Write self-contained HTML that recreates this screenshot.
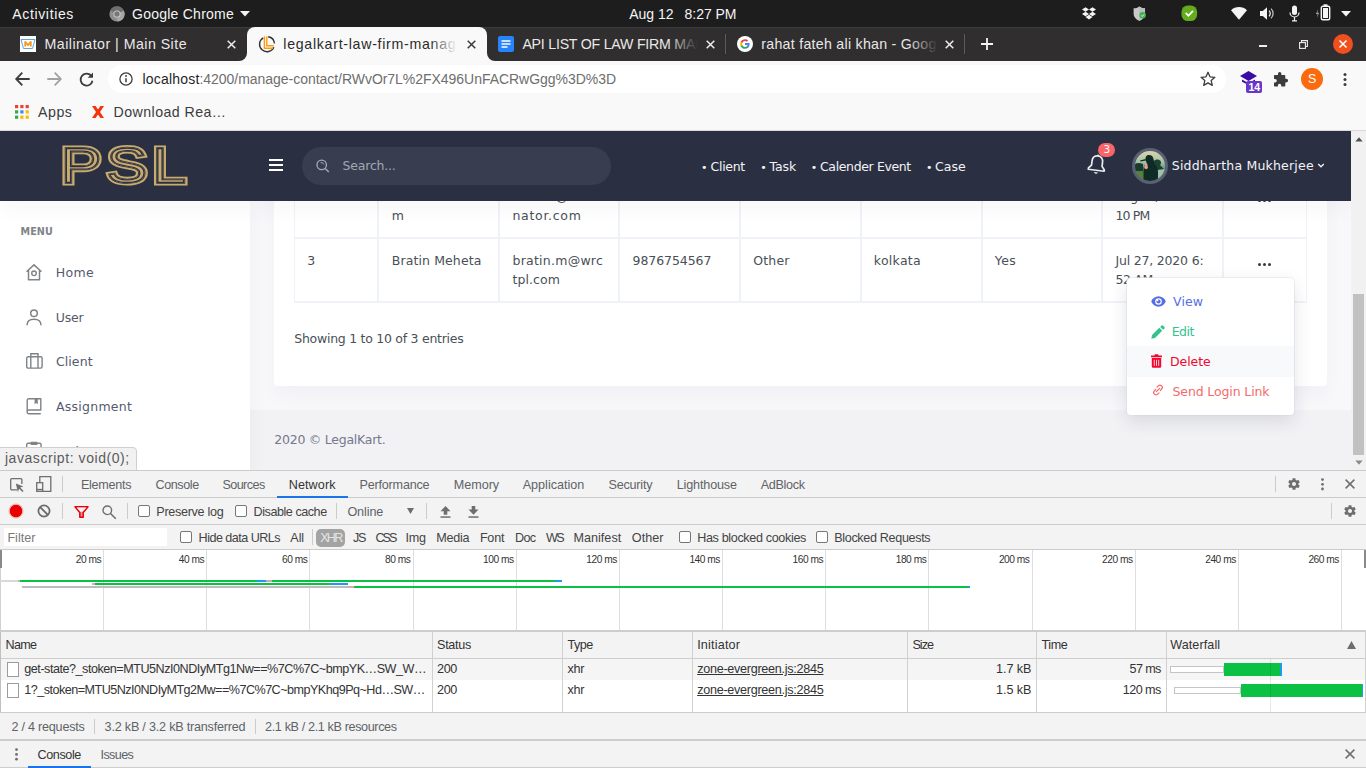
<!DOCTYPE html>
<html lang="en">
<head>
<meta charset="utf-8">
<title>legalkart-law-firm-management</title>
<style>
*{box-sizing:border-box;margin:0;padding:0}
html,body{width:1366px;height:768px;overflow:hidden;background:#fff}
body{position:relative;font-family:"Liberation Sans",sans-serif;color:#222}
.a{position:absolute}
.t{position:absolute;white-space:nowrap}
svg{position:absolute;overflow:visible}
#gnome{left:0;top:0;width:1366px;height:27px;background:#1d1d1d;color:#f4f4f4}
#tabs{left:0;top:27px;width:1366px;height:34px;background:#302e2e;color:#e8e8e8}
#toolbar{left:0;top:61px;width:1366px;height:70px;background:#f9f9f9;color:#202124}
#page{left:0;top:131px;width:1351px;height:339px;background:#f8f8fb;overflow:hidden;color:#495057}
#vscroll{left:1351px;top:131px;width:15px;height:339px;background:#f1f1f1}
#dev{left:0;top:470px;width:1366px;height:298px;background:#fff;color:#333;overflow:hidden}
.hl{position:absolute;left:0;width:1366px;height:1px;background:#cbcbcb}
.vl{position:absolute;width:1px;background:#cbcbcb}
.cb{position:absolute;width:12px;height:12px;border:1px solid #767676;border-radius:2px;background:#fff}
</style>
</head>
<body>
<div id="gnome" class="a">
<span class="t" style="left:12.3px;top:5px;line-height:18px;font-size:14px;letter-spacing:0.647px;">Activities</span>
<svg style="left:109px;top:5.5px" width="16" height="16" viewBox="0 0 16 16"><circle cx="8" cy="8" r="7.6" fill="#8e8e8e"/><path d="M8 8 L1.2 4.4 A7.6 7.6 0 0 1 14.9 4.8 Z" fill="#6f6f6f"/><path d="M8 8 L14.9 4.8 A7.6 7.6 0 0 1 8.4 15.6 Z" fill="#a5a5a5"/><circle cx="8" cy="8" r="3.5" fill="#d6d6d6"/><circle cx="8" cy="8" r="2.7" fill="#777"/></svg>
<span class="t" style="left:132px;top:5px;line-height:18px;font-size:14px;letter-spacing:0.244px;">Google Chrome</span>
<svg style="left:240px;top:11px" width="10" height="6" viewBox="0 0 10 6"><path d="M0 0h10L5 5.5z" fill="#f4f4f4"/></svg>
<span class="t" style="left:629.2px;top:5px;line-height:18px;font-size:14px;letter-spacing:-0.013px;">Aug 12</span>
<span class="t" style="left:684.6px;top:5px;line-height:18px;font-size:14px;letter-spacing:-0.049px;">8:27 PM</span>
<!-- tray: dropbox -->
<svg style="left:1082px;top:6.8px" width="14" height="12.7" viewBox="0 0 16 14"><path d="M4 0l4 2.6L4 5.2 0 2.6zM12 0l4 2.6-4 2.6-4-2.6zM0 7.8l4-2.6 4 2.6-4 2.6zM12 5.200l4 2.6-4 2.600-4-2.600zM4 11.300l4-2.600 4 2.600-4 2.600z" fill="#f4f4f4"/></svg>
<!-- shield -->
<svg style="left:1132.8px;top:5.7px" width="13.5" height="15.4" viewBox="0 0 15 17.5"><path d="M7 0.500C5 2 3 2.500 0.500 2.600V8.500c0 4 3 6.800 6.500 8.500 3.500-1.700 6.500-4.500 6.500-8.500V2.600C11 2.500 9 2 7 0.500z" fill="#c9c9c9"/><path d="M7 0.500V17c3.500-1.700 6.500-4.500 6.500-8.500V2.600C11 2.500 9 2 7 0.500z" fill="#bdbdbd"/><circle cx="10.800" cy="10.600" r="3.700" fill="#3fb24f"/><path d="M9.100 10.700l1.200 1.200 2.200-2.400" stroke="#fff" stroke-width="1" fill="none"/></svg>
<!-- green check -->
<svg style="left:1180.7px;top:4.7px" width="16.600" height="16.600" viewBox="0 0 17 17"><rect x="0.500" y="0.500" width="16" height="16" rx="6.500" fill="#64ab1e"/><path d="M5.300 8.700l2.300 2.300 4.200-4.500" stroke="#fff" stroke-width="1.800" fill="none" stroke-linecap="round"/></svg>
<!-- wifi -->
<svg style="left:1231px;top:7px" width="16" height="13" viewBox="0 0 16 13"><path d="M8 12.800L0 3.200C2.200 1.200 5 0 8 0s5.800 1.200 8 3.200z" fill="#f4f4f4"/></svg>
<!-- volume -->
<svg style="left:1260px;top:7px" width="15" height="13" viewBox="0 0 15 13"><path d="M0 4h2.800L7 0.300v12.400L2.800 9H0z" fill="#f4f4f4"/><path d="M9 3.600a4 4 0 0 1 0 5.800" stroke="#f4f4f4" stroke-width="1.300" fill="none"/><path d="M11 1.600a6.800 6.800 0 0 1 0 9.800" stroke="#bdbdbd" stroke-width="1.300" fill="none"/></svg>
<!-- mic -->
<svg style="left:1289px;top:5px" width="11" height="17" viewBox="0 0 11 17"><rect x="3" y="0.500" width="5" height="9.500" rx="2.500" fill="#f4f4f4"/><path d="M1 7.500a4.500 4.500 0 0 0 9 0M5.500 12v3.500M3 15.800h5" stroke="#f4f4f4" stroke-width="1.200" fill="none"/></svg>
<!-- battery -->
<svg style="left:1315px;top:4px" width="16" height="17" viewBox="0 0 16 17"><path d="M3.200 5L0.800 10h1.800l-0.800 4 2.400-5.200H2.400z" fill="#9a9a9a"/><rect x="6.300" y="2.300" width="8.400" height="13.400" rx="1.500" fill="none" stroke="#f4f4f4" stroke-width="1.400"/><rect x="8.500" y="0.300" width="4" height="2" fill="#f4f4f4"/><rect x="8" y="4" width="5" height="10" fill="#f4f4f4"/></svg>
<svg style="left:1341px;top:11px" width="10" height="6" viewBox="0 0 10 6"><path d="M0 0h10L5 5.500z" fill="#f4f4f4"/></svg>
</div>
<div id="tabs" class="a">
<div class="a" style="left:0;top:0;width:1366px;height:1px;background:#3d3b3b"></div>
<!-- active tab -->
<div class="a" style="left:247px;top:0;width:240px;height:34px;background:#f9f9f9;border-radius:8px 8px 0 0"></div>
<svg style="left:239px;top:26px" width="8" height="8" viewBox="0 0 8 8"><path d="M8 0v8H0A8 8 0 0 0 8 0z" fill="#f9f9f9"/></svg>
<svg style="left:487px;top:26px" width="8" height="8" viewBox="0 0 8 8"><path d="M0 0v8h8A8 8 0 0 1 0 0z" fill="#f9f9f9"/></svg>
<!-- tab1 mailinator -->
<svg style="left:20px;top:9px" width="16" height="16" viewBox="0 0 16 16"><rect width="16" height="16" fill="#fff"/><path d="M1 3.500h14l-2.500 9h-9z" fill="none" stroke="#5aa7e6" stroke-width="1"/><path d="M4.300 5.200h1.800l1.900 2.600 1.900-2.600h1.800v5.300H9.900V8.200L8 10.500 6.100 8.200v2.300H4.300z" fill="#f39a1e"/></svg>
<span class="t" style="left:44.500px;top:8px;line-height:18px;font-size:14.200px;letter-spacing:0.467px;">Mailinator | Main Site</span>
<svg style="left:227.200px;top:12.500px" width="9" height="9" viewBox="0 0 9 9"><path d="M0.700 0.700l7.600 7.600M8.300 0.700L0.700 8.300" stroke="#eee" stroke-width="1.500"/></svg>
<!-- tab2 active -->
<svg style="left:259px;top:8.700px" width="16.400" height="16.400" viewBox="0 0 16.400 16.400"><path d="M9.200 0.800A7.500 7.500 0 0 1 15.500 7.400M14.900 11.300A7.500 7.500 0 1 1 4.200 1.800" fill="none" stroke="#2d303b" stroke-width="1.400"/><path d="M5.400 0.600v11.600h8.600" fill="none" stroke="#ff9a0a" stroke-width="1.400"/><path d="M7.800 0.500v9.200h7" fill="none" stroke="#ff9a0a" stroke-width="1.400"/></svg>
<div class="a" style="left:283px;top:4px;width:174px;height:24px;overflow:hidden"><span class="t" style="left:0.300px;top:4px;line-height:18px;font-size:14.200px;letter-spacing:0.708px;color:#2b2b2b;">legalkart-law-firm-manage</span></div>
<div class="a" style="left:430px;top:4px;width:27px;height:24px;background:linear-gradient(90deg,rgba(249,249,249,0),#f9f9f9)"></div>
<svg style="left:466.500px;top:12.500px" width="9" height="9" viewBox="0 0 9 9"><path d="M0.700 0.700l7.600 7.600M8.300 0.700L0.700 8.300" stroke="#3a3a3a" stroke-width="1.500"/></svg>
<!-- tab3 docs -->
<svg style="left:498px;top:9px" width="16" height="16" viewBox="0 0 16 16"><rect width="16" height="16" rx="2" fill="#2684fc"/><path d="M3.500 5h9M3.500 8h9M3.500 11h6" stroke="#fff" stroke-width="1.500"/></svg>
<div class="a" style="left:522px;top:4px;width:176px;height:24px;overflow:hidden"><span class="t" style="left:0.400px;top:4px;line-height:18px;font-size:14.200px;letter-spacing:-0.234px;">API LIST OF LAW FIRM MAN</span></div>
<div class="a" style="left:668px;top:4px;width:30px;height:24px;background:linear-gradient(90deg,rgba(48,46,46,0),#302e2e)"></div>
<svg style="left:705.500px;top:12.500px" width="9" height="9" viewBox="0 0 9 9"><path d="M0.700 0.700l7.600 7.600M8.300 0.700L0.700 8.300" stroke="#eee" stroke-width="1.500"/></svg>
<div class="a" style="left:725px;top:7px;width:1px;height:20px;background:#5c5a5a"></div>
<!-- tab4 google -->
<svg style="left:737px;top:9px" width="16" height="16" viewBox="0 0 16 16"><circle cx="8" cy="8" r="8" fill="#fff"/><path d="M12.600 8.100c0-.4 0-.7-.1-1H8v1.900h2.600c-.1.600-.5 1.100-1 1.500v1.200h1.600c.9-.9 1.400-2.100 1.400-3.600z" fill="#4285f4"/><path d="M8 12.800c1.300 0 2.400-.4 3.200-1.200l-1.600-1.200c-.4.300-1 .5-1.600.5-1.200 0-2.300-.8-2.700-2H3.700v1.300c.8 1.600 2.400 2.600 4.300 2.600z" fill="#34a853"/><path d="M5.300 8.900c-.1-.3-.2-.6-.2-.9s.1-.6.200-.9V5.800H3.700c-.3.700-.5 1.400-.5 2.200s.2 1.500.5 2.200z" fill="#fbbc05"/><path d="M8 5.100c.7 0 1.300.2 1.800.7l1.400-1.400C10.400 3.600 9.300 3.200 8 3.200c-1.900 0-3.500 1.100-4.300 2.600l1.600 1.300c.4-1.200 1.500-2 2.700-2z" fill="#ea4335"/></svg>
<div class="a" style="left:761px;top:4px;width:177px;height:24px;overflow:hidden"><span class="t" style="left:0.300px;top:4px;line-height:18px;font-size:14.200px;letter-spacing:0.269px;">rahat fateh ali khan - Googl</span></div>
<div class="a" style="left:908px;top:4px;width:30px;height:24px;background:linear-gradient(90deg,rgba(48,46,46,0),#302e2e)"></div>
<svg style="left:944.500px;top:12.500px" width="9" height="9" viewBox="0 0 9 9"><path d="M0.700 0.700l7.600 7.600M8.300 0.700L0.700 8.300" stroke="#eee" stroke-width="1.500"/></svg>
<div class="a" style="left:964px;top:7px;width:1px;height:20px;background:#5c5a5a"></div>
<svg style="left:981px;top:11.200px" width="12" height="12" viewBox="0 0 12 12"><path d="M6 0v12M0 6h12" stroke="#f4f4f4" stroke-width="1.800"/></svg>
<!-- window controls -->
<div class="a" style="left:1259px;top:18.400px;width:8px;height:1.500px;background:#eee"></div>
<svg style="left:1299px;top:13px" width="9" height="9" viewBox="0 0 9 9"><path d="M2.500 2.200V0.600h5.900v5.900H6.800" fill="none" stroke="#eee" stroke-width="1.100"/><rect x="0.600" y="2.600" width="5.800" height="5.800" fill="none" stroke="#eee" stroke-width="1.100"/></svg>
<div class="a" style="left:1333px;top:7px;width:20px;height:20px;border-radius:10px;background:#f0501f"></div>
<svg style="left:1339px;top:13px" width="8" height="8" viewBox="0 0 8 8"><path d="M0.500 0.500l7 7M7.500 0.500l-7 7" stroke="#fff" stroke-width="1.500"/></svg>
</div>
<div id="toolbar" class="a">
<div class="a" style="left:0;top:69px;width:1366px;height:1px;background:#d9d9d9"></div>
<!-- nav icons -->
<svg style="left:14.500px;top:11px" width="15" height="14" viewBox="0 0 15 14"><path d="M7.300 0.700L1.200 7l6.100 6.300M1.200 7h13.500" fill="none" stroke="#3c3c3c" stroke-width="1.800"/></svg>
<svg style="left:46.500px;top:11px" width="15" height="14" viewBox="0 0 15 14"><path d="M7.700 0.700L13.800 7l-6.100 6.300M13.800 7H0.300" fill="none" stroke="#a2a2a2" stroke-width="1.800"/></svg>
<svg style="left:79px;top:10.500px" width="15" height="15" viewBox="0 0 15 15"><path d="M12.600 4.200A6 6 0 1 0 13.500 8.800" fill="none" stroke="#3c3c3c" stroke-width="1.800"/><path d="M14 0.500v5.300H8.700z" fill="#3c3c3c"/></svg>
<!-- url pill -->
<div class="a" style="left:108px;top:4px;width:1118px;height:28px;border-radius:14px;background:#fff"></div>
<svg style="left:119px;top:11px" width="14" height="14" viewBox="0 0 14 14"><circle cx="7" cy="7" r="6.100" fill="none" stroke="#3c3c3c" stroke-width="1.300"/><path d="M7 6.200v4" stroke="#3c3c3c" stroke-width="1.500"/><circle cx="7" cy="4" r="0.900" fill="#3c3c3c"/></svg>
<span class="t" style="left:142.500px;top:9px;line-height:18px;font-size:14px;letter-spacing:0.193px;color:#1f1f1f;">localhost</span>
<span class="t" style="left:199.500px;top:9px;line-height:18px;font-size:14px;letter-spacing:-0.037px;color:#6e6e6e;">:4200/manage-contact/RWvOr7L%2FX496UnFACRwGgg%3D%3D</span>
<svg style="left:1200px;top:10px" width="16" height="16" viewBox="0 0 16 16"><path d="M8 1.300l2 4.500 4.900.5-3.700 3.300 1.100 4.800L8 11.900l-4.300 2.500 1.100-4.800L1.100 6.300 6 5.800z" fill="none" stroke="#3c3c3c" stroke-width="1.300" stroke-linejoin="round"/></svg>
<!-- extension -->
<svg style="left:1239.500px;top:10px" width="17" height="14" viewBox="0 0 17 14"><path d="M8.500 0L17 5l-8.500 5L0 5z" fill="#3a0ca3"/><path d="M2 8.500l6.500 3.800L15 8.500v2.300L8.500 14 2 10.800z" fill="#3a0ca3"/></svg>
<div class="a" style="left:1246px;top:20px;width:16px;height:12px;background:#6a35c9;border-radius:2px"></div>
<span class="t" style="left:1248.400px;top:19px;line-height:14px;font-size:10.600px;letter-spacing:0.002px;color:#fff;font-weight:700;">14</span>
<svg style="left:1272px;top:11px" width="16" height="16" viewBox="0 0 16 16"><path d="M6 1.800a1.700 1.700 0 0 1 3.400 0V3h3.100a.8.800 0 0 1 .8.800v3h1a1.800 1.800 0 0 1 0 3.600h-1v3.300a.8.800 0 0 1-.8.800H9.300v-1.100a1.700 1.700 0 0 0-3.400 0v1.100H2.800a.8.800 0 0 1-.8-.8v-3.200h1.100a1.700 1.700 0 0 0 0-3.400H2V3.800a.8.800 0 0 1 .8-.8H6z" fill="#3c3c3c"/></svg>
<div class="a" style="left:1301px;top:7px;width:22px;height:22px;border-radius:11px;background:#fb6a0c"></div>
<span class="t" style="left:1308px;top:10px;line-height:16px;font-size:12.500px;letter-spacing:-0.344px;color:#fff;">S</span>
<svg style="left:1342.500px;top:11px" width="4" height="15" viewBox="0 0 4 15"><circle cx="2" cy="2.500" r="1.500" fill="#3c3c3c"/><circle cx="2" cy="7.500" r="1.500" fill="#3c3c3c"/><circle cx="2" cy="12.500" r="1.500" fill="#3c3c3c"/></svg>
<!-- bookmarks -->
<svg style="left:14.500px;top:44px" width="14" height="14" viewBox="0 0 14 14"><g><rect x="0" y="0" width="3.200" height="3.200" fill="#ea4335"/><rect x="5.300" y="0" width="3.200" height="3.200" fill="#ea4335"/><rect x="10.600" y="0" width="3.200" height="3.200" fill="#ea4335"/><rect x="0" y="5.300" width="3.200" height="3.200" fill="#34a853"/><rect x="5.300" y="5.300" width="3.200" height="3.200" fill="#4285f4"/><rect x="10.600" y="5.300" width="3.200" height="3.200" fill="#fbbc05"/><rect x="0" y="10.600" width="3.200" height="3.200" fill="#34a853"/><rect x="5.300" y="10.600" width="3.200" height="3.200" fill="#fbbc05"/><rect x="10.600" y="10.600" width="3.200" height="3.200" fill="#fbbc05"/></g></svg>
<span class="t" style="left:38.100px;top:42px;line-height:18px;font-size:14.200px;letter-spacing:0.464px;color:#3c3c3c;">Apps</span>
<svg style="left:91.500px;top:45px" width="12" height="12" viewBox="0 0 12 12"><path d="M0 0h3.600L6 3.600 8.400 0H12L8 6l4 6H8.400L6 8.400 3.600 12H0l4-6z" fill="#f4330d"/></svg>
<span class="t" style="left:113.500px;top:42px;line-height:18px;font-size:14.200px;letter-spacing:0.441px;color:#3c3c3c;">Download Rea…</span>
</div>
<div id="page" class="a">
<!-- content background pieces (page coords: y = abs-131) -->
<div class="a" style="left:250px;top:279px;width:1101px;height:60px;background:#f2f2f5"></div>
<!-- card -->
<div class="a" style="left:274px;top:0;width:1053px;height:255px;background:#fff;border-radius:0 0 4px 4px;box-shadow:0 10px 20px rgba(18,38,63,.03)"></div>
<!-- sidebar -->
<div class="a" style="left:0;top:70px;width:250px;height:269px;background:#fff;box-shadow:0 10px 20px rgba(18,38,63,.04)"></div>
<!-- table (page coords: y = abs-131) -->
<div class="a" style="left:294px;top:60px;width:1px;height:111px;background:#eff2f7"></div>
<div class="a" style="left:1306px;top:60px;width:1px;height:111px;background:#eff2f7"></div>
<div class="a" style="left:377px;top:60px;width:2px;height:111px;background:#eff2f7"></div>
<div class="a" style="left:498px;top:60px;width:2px;height:111px;background:#eff2f7"></div>
<div class="a" style="left:618px;top:60px;width:2px;height:111px;background:#eff2f7"></div>
<div class="a" style="left:739px;top:60px;width:2px;height:111px;background:#eff2f7"></div>
<div class="a" style="left:860px;top:60px;width:2px;height:111px;background:#eff2f7"></div>
<div class="a" style="left:981px;top:60px;width:2px;height:111px;background:#eff2f7"></div>
<div class="a" style="left:1101px;top:60px;width:2px;height:111px;background:#eff2f7"></div>
<div class="a" style="left:1222px;top:60px;width:2px;height:111px;background:#eff2f7"></div>
<div class="a" style="left:294px;top:106px;width:1013px;height:2px;background:#eff2f7"></div>
<div class="a" style="left:294px;top:170px;width:1013px;height:1.500px;background:#eff2f7"></div>
<span class="t" style="left:307.2px;top:57px;line-height:17px;font-size:12.500px;font-family:'DejaVu Sans','Liberation Sans',sans-serif;color:#495057;">2</span>
<span class="t" style="left:391.7px;top:57px;line-height:17px;font-size:12.500px;letter-spacing:-1.435px;font-family:'DejaVu Sans','Liberation Sans',sans-serif;color:#495057;">Mailinator Test Tea</span>
<span class="t" style="left:391.7px;top:76px;line-height:17px;font-size:12.500px;letter-spacing:-0.587px;font-family:'DejaVu Sans','Liberation Sans',sans-serif;color:#495057;">m</span>
<span class="t" style="left:512.5px;top:57px;line-height:17px;font-size:12.500px;letter-spacing:-0.698px;font-family:'DejaVu Sans','Liberation Sans',sans-serif;color:#495057;">admin1@maili</span>
<span class="t" style="left:512.5px;top:76px;line-height:17px;font-size:12.500px;letter-spacing:0.700px;font-family:'DejaVu Sans','Liberation Sans',sans-serif;color:#495057;">nator.com</span>
<span class="t" style="left:632.5px;top:57px;line-height:17px;font-size:12.500px;letter-spacing:-0.063px;font-family:'DejaVu Sans','Liberation Sans',sans-serif;color:#495057;">9830098300</span>
<span class="t" style="left:753.3px;top:57px;line-height:17px;font-size:12.500px;font-family:'DejaVu Sans','Liberation Sans',sans-serif;color:#495057;">Lawfirm</span>
<span class="t" style="left:873.8px;top:57px;line-height:17px;font-size:12.500px;font-family:'DejaVu Sans','Liberation Sans',sans-serif;color:#495057;">kolkata</span>
<span class="t" style="left:994.7px;top:57px;line-height:17px;font-size:12.500px;font-family:'DejaVu Sans','Liberation Sans',sans-serif;color:#495057;">Yes</span>
<span class="t" style="left:1115.5px;top:57px;line-height:17px;font-size:12.500px;letter-spacing:-0.846px;font-family:'DejaVu Sans','Liberation Sans',sans-serif;color:#495057;">Aug 12, 2020 8:</span>
<span class="t" style="left:1115.5px;top:76px;line-height:17px;font-size:12.500px;letter-spacing:-0.881px;font-family:'DejaVu Sans','Liberation Sans',sans-serif;color:#495057;">10 PM</span>
<span class="t" style="left:307.2px;top:121px;line-height:17px;font-size:12.500px;letter-spacing:-0.553px;font-family:'DejaVu Sans','Liberation Sans',sans-serif;color:#495057;">3</span>
<span class="t" style="left:391.7px;top:121px;line-height:17px;font-size:12.500px;letter-spacing:0.116px;font-family:'DejaVu Sans','Liberation Sans',sans-serif;color:#495057;">Bratin Meheta</span>
<span class="t" style="left:512.5px;top:121px;line-height:17px;font-size:12.500px;letter-spacing:0.247px;font-family:'DejaVu Sans','Liberation Sans',sans-serif;color:#495057;">bratin.m@wrc</span>
<span class="t" style="left:512.5px;top:140px;line-height:17px;font-size:12.500px;letter-spacing:0.074px;font-family:'DejaVu Sans','Liberation Sans',sans-serif;color:#495057;">tpl.com</span>
<span class="t" style="left:632.5px;top:121px;line-height:17px;font-size:12.500px;letter-spacing:-0.063px;font-family:'DejaVu Sans','Liberation Sans',sans-serif;color:#495057;">9876754567</span>
<span class="t" style="left:753.3px;top:121px;line-height:17px;font-size:12.500px;letter-spacing:0.140px;font-family:'DejaVu Sans','Liberation Sans',sans-serif;color:#495057;">Other</span>
<span class="t" style="left:873.8px;top:121px;line-height:17px;font-size:12.500px;letter-spacing:0.292px;font-family:'DejaVu Sans','Liberation Sans',sans-serif;color:#495057;">kolkata</span>
<span class="t" style="left:994.7px;top:121px;line-height:17px;font-size:12.500px;letter-spacing:0.471px;font-family:'DejaVu Sans','Liberation Sans',sans-serif;color:#495057;">Yes</span>
<span class="t" style="left:1115.5px;top:121px;line-height:17px;font-size:12.500px;letter-spacing:-0.197px;font-family:'DejaVu Sans','Liberation Sans',sans-serif;color:#495057;">Jul 27, 2020 6:</span>
<span class="t" style="left:1115.5px;top:140px;line-height:17px;font-size:12.500px;letter-spacing:-0.344px;font-family:'DejaVu Sans','Liberation Sans',sans-serif;color:#495057;">52 AM</span>
<div class="a" style="left:1258.3px;top:67.700px;width:3px;height:3px;border-radius:1.500px;background:#343a40"></div>
<div class="a" style="left:1262.9px;top:67.700px;width:3px;height:3px;border-radius:1.500px;background:#343a40"></div>
<div class="a" style="left:1267.5px;top:67.700px;width:3px;height:3px;border-radius:1.500px;background:#343a40"></div>
<div class="a" style="left:1258.3px;top:131.5px;width:3px;height:3px;border-radius:1.500px;background:#343a40"></div>
<div class="a" style="left:1262.9px;top:131.5px;width:3px;height:3px;border-radius:1.500px;background:#343a40"></div>
<div class="a" style="left:1267.5px;top:131.5px;width:3px;height:3px;border-radius:1.500px;background:#343a40"></div>
<span class="t" style="left:294.3px;top:199px;line-height:17px;font-size:12.500px;letter-spacing:-0.269px;font-family:'DejaVu Sans','Liberation Sans',sans-serif;color:#495057;">Showing 1 to 10 of 3 entries</span>
<span class="t" style="left:274.3px;top:300px;line-height:17px;font-size:12.500px;letter-spacing:-0.254px;font-family:'DejaVu Sans','Liberation Sans',sans-serif;color:#74788d;">2020 © LegalKart.</span>
<div class="a" style="left:1127px;top:147px;width:167px;height:137px;background:#fff;border-radius:4px;box-shadow:0 6px 18px rgba(30,40,70,.13),0 0 0 1px rgba(230,233,240,.6)"></div>
<div class="a" style="left:1127px;top:215px;width:167px;height:31px;background:#f8f9fa"></div>
<svg style="left:1150.500px;top:164.500px" width="15" height="11" viewBox="0 0 15 11"><path d="M7.500 0.300C4.200 0.300 1.500 2.400 0.200 5.500c1.300 3.100 4 5.200 7.300 5.200s6-2.100 7.300-5.200C13.500 2.400 10.800 0.300 7.500 0.300z" fill="#556ee6"/><circle cx="7.500" cy="5.500" r="3.300" fill="#fff"/><circle cx="7.500" cy="5.500" r="2.100" fill="#556ee6"/><circle cx="6.600" cy="4.600" r="0.800" fill="#fff"/></svg>
<span class="t" style="left:1173px;top:162px;line-height:17px;font-size:12.500px;letter-spacing:0.132px;font-family:'DejaVu Sans','Liberation Sans',sans-serif;color:#556ee6;">View</span>
<svg style="left:1150.500px;top:193.500px" width="14" height="14" viewBox="0 0 14 14"><path d="M0.300 13.700l0.800-3.700 7.200-7.200 2.900 2.900-7.200 7.200z" fill="#34c38f"/><path d="M9.200 1.900l1.300-1.300a1 1 0 0 1 1.400 0l1.500 1.500a1 1 0 0 1 0 1.400l-1.300 1.300z" fill="#34c38f"/></svg>
<span class="t" style="left:1171.7px;top:192px;line-height:17px;font-size:12.500px;letter-spacing:-0.480px;font-family:'DejaVu Sans','Liberation Sans',sans-serif;color:#34c38f;">Edit</span>
<svg style="left:1151px;top:223px" width="11" height="14" viewBox="0 0 11 14"><path d="M0 1.500h3.300L4 0.300h3l0.700 1.200H11v1.700H0z" fill="#f1082f"/><path d="M0.800 4h9.400v8.600a1.200 1.200 0 0 1-1.200 1.200H2a1.200 1.200 0 0 1-1.200-1.200z" fill="#f1082f"/><path d="M3.300 5.800v6M5.500 5.800v6M7.700 5.800v6" stroke="#fff" stroke-width="0.800"/></svg>
<span class="t" style="left:1170px;top:222px;line-height:17px;font-size:12.500px;letter-spacing:-0.080px;font-family:'DejaVu Sans','Liberation Sans',sans-serif;color:#f1082f;">Delete</span>
<svg style="left:1152px;top:252.500px" width="12" height="12" viewBox="0 0 12 12"><path d="M5 3.200l1.300-1.300a2.300 2.300 0 0 1 3.300 3.300L8.300 6.500M7 8.800L5.700 10.100a2.300 2.300 0 0 1-3.300-3.300L3.700 5.500M4.300 7.700l3.400-3.400" fill="none" stroke="#f46a6a" stroke-width="1.200" stroke-linecap="round"/></svg>
<span class="t" style="left:1172.5px;top:252px;line-height:17px;font-size:12.500px;letter-spacing:-0.117px;font-family:'DejaVu Sans','Liberation Sans',sans-serif;color:#f46a6a;">Send Login Link</span>
<!-- sidebar contents (page coords: y = abs-131) -->
<span class="t" style="left:20.500px;top:94px;line-height:13px;font-size:9.600px;letter-spacing:0.120px;font-family:'DejaVu Sans','Liberation Sans',sans-serif;color:#7f8387;font-weight:700;">MENU</span>
<svg style="left:26px;top:133px" width="16" height="17" viewBox="0 0 16 17"><path d="M8 0.900L1 7.200M8 0.900l7 6.300M2.500 6v9.700h11V6" fill="none" stroke="#7f8387" stroke-width="1.500" stroke-linejoin="round" stroke-linecap="round"/><circle cx="8" cy="9.300" r="2.300" fill="none" stroke="#7f8387" stroke-width="1.400"/></svg>
<span class="t" style="left:55.800px;top:133px;line-height:17px;font-size:12.500px;letter-spacing:0.345px;font-family:'DejaVu Sans','Liberation Sans',sans-serif;color:#545a6d;">Home</span>
<svg style="left:26px;top:178px" width="16" height="17" viewBox="0 0 16 17"><circle cx="8" cy="4.300" r="3.300" fill="none" stroke="#7f8387" stroke-width="1.500"/><path d="M1 16.200c0-4 3-6 7-6s7 2 7 6" fill="none" stroke="#7f8387" stroke-width="1.500"/></svg>
<span class="t" style="left:55.800px;top:178px;line-height:17px;font-size:12.500px;letter-spacing:-0.225px;font-family:'DejaVu Sans','Liberation Sans',sans-serif;color:#545a6d;">User</span>
<svg style="left:26px;top:222px" width="17" height="16" viewBox="0 0 17 16"><rect x="0.700" y="3.800" width="15.400" height="11.300" rx="1.500" fill="none" stroke="#7f8387" stroke-width="1.400"/><path d="M4.800 3.800V0.700h7.200v3.100M4.800 3.800v11.300M12 3.800v11.300" fill="none" stroke="#7f8387" stroke-width="1.400"/></svg>
<span class="t" style="left:55.900px;top:222px;line-height:17px;font-size:12.500px;letter-spacing:0.099px;font-family:'DejaVu Sans','Liberation Sans',sans-serif;color:#545a6d;">Client</span>
<svg style="left:26px;top:267px" width="16" height="17" viewBox="0 0 16 17"><path d="M1.200 13.600V2.200a1.500 1.500 0 0 1 1.500-1.500h12.100v11.300H3a1.800 1.800 0 0 0 0 3.800h11.800" fill="none" stroke="#7f8387" stroke-width="1.400" stroke-linejoin="round"/><path d="M8.600 0.700h3.200v5.500L10.200 5 8.600 6.200z" fill="#7f8387"/></svg>
<span class="t" style="left:55.900px;top:267px;line-height:17px;font-size:12.500px;letter-spacing:0.269px;font-family:'DejaVu Sans','Liberation Sans',sans-serif;color:#545a6d;">Assignment</span>
<svg style="left:26px;top:310px" width="16" height="18" viewBox="0 0 16 18"><rect x="0.700" y="2.200" width="14.400" height="15" rx="1.500" fill="none" stroke="#7f8387" stroke-width="1.400"/><rect x="4.500" y="0.700" width="7" height="3.300" rx="0.800" fill="#7f8387"/></svg>
<span class="t" style="left:55.900px;top:312px;line-height:17px;font-size:12.500px;letter-spacing:-0.071px;font-family:'DejaVu Sans','Liberation Sans',sans-serif;color:#545a6d;">Task</span>
<!-- status bubble -->
<div class="a" style="left:-1px;top:316px;width:138px;height:25px;background:#f1f1f1;border:1px solid #cfcfcf;border-radius:0 4px 0 0"></div>
<span class="t" style="left:4.900px;top:318px;line-height:18px;font-size:14px;letter-spacing:0.565px;color:#5b5b5b;">javascript: void(0);</span>
<!-- app header -->
<div class="a" style="left:0;top:0;width:1351px;height:70px;background:#2a3042;box-shadow:0 10px 20px rgba(18,38,63,.03)"></div>
<svg style="left:0;top:0" width="250" height="70" viewBox="0 0 250 70">
<defs><clipPath id="lg"><text x="0" y="0" style="font-family:'Liberation Sans',sans-serif;font-weight:400;font-size:49.800px;letter-spacing:3.500px">PSL</text></clipPath></defs>
<g transform="translate(60.600 52.400) scale(1.245 1)" style="font-family:'Liberation Sans',sans-serif;font-weight:400;font-size:49.800px;letter-spacing:3.500px">
<text x="0" y="0" fill="none" stroke="#c9ab6e" stroke-width="5" stroke-linejoin="miter">PSL</text>
<text x="0" y="0" fill="#2a3042" stroke="#2a3042" stroke-width="1.300" stroke-linejoin="miter">PSL</text>
<text x="0" y="0" fill="#c9ab6e">PSL</text>
<text x="0" y="0" fill="none" stroke="#2a3042" stroke-width="2.300" clip-path="url(#lg)" stroke-linejoin="miter">PSL</text>
</g>
</svg>
<div class="a" style="left:269px;top:28px;width:14px;height:2px;background:#fff"></div>
<div class="a" style="left:269px;top:33px;width:14px;height:2px;background:#fff"></div>
<div class="a" style="left:269px;top:38px;width:14px;height:2px;background:#fff"></div>
<div class="a" style="left:302px;top:16px;width:309px;height:38px;border-radius:19px;background:#383e4f"></div>
<svg style="left:315.500px;top:28px" width="14" height="14" viewBox="0 0 14 14"><circle cx="5.700" cy="5.900" r="4.700" fill="none" stroke="#a7abba" stroke-width="1.300"/><path d="M9.200 9.400l3.600 3.600" stroke="#a7abba" stroke-width="1.400"/><path d="M4.600 3.700a2.600 2.600 0 0 1 3.200 1.600" stroke="#a7abba" stroke-width="1" fill="none"/></svg>
<span class="t" style="left:342.600px;top:26px;line-height:17px;font-size:12.500px;letter-spacing:-0.208px;font-family:'DejaVu Sans','Liberation Sans',sans-serif;color:#a3a7b5;">Search...</span>
<span class="t" style="left:700.900px;top:29px;line-height:15px;font-size:11px;font-family:'DejaVu Sans','Liberation Sans',sans-serif;color:#f3f3f6;">•</span><span class="t" style="left:710.500px;top:27px;line-height:17px;font-size:12.500px;letter-spacing:-0.284px;font-family:'DejaVu Sans','Liberation Sans',sans-serif;color:#f3f3f6;">Client</span>
<span class="t" style="left:760.300px;top:29px;line-height:15px;font-size:11px;font-family:'DejaVu Sans','Liberation Sans',sans-serif;color:#f3f3f6;">•</span><span class="t" style="left:769.500px;top:27px;line-height:17px;font-size:12.500px;letter-spacing:-0.071px;font-family:'DejaVu Sans','Liberation Sans',sans-serif;color:#f3f3f6;">Task</span>
<span class="t" style="left:810.800px;top:29px;line-height:15px;font-size:11px;font-family:'DejaVu Sans','Liberation Sans',sans-serif;color:#f3f3f6;">•</span><span class="t" style="left:820px;top:27px;line-height:17px;font-size:12.500px;letter-spacing:-0.367px;font-family:'DejaVu Sans','Liberation Sans',sans-serif;color:#f3f3f6;">Calender Event</span>
<span class="t" style="left:926.100px;top:29px;line-height:15px;font-size:11px;font-family:'DejaVu Sans','Liberation Sans',sans-serif;color:#f3f3f6;">•</span><span class="t" style="left:934.900px;top:27px;line-height:17px;font-size:12.500px;letter-spacing:0.077px;font-family:'DejaVu Sans','Liberation Sans',sans-serif;color:#f3f3f6;">Case</span>
<!-- bell -->
<svg style="left:1087px;top:23px" width="20" height="21" viewBox="0 0 20 21"><g transform="rotate(7 10 10)"><path d="M10 1.800c-3.300 0-5.300 2.400-5.300 5.600v4.300L2 15v1.300h16V15l-2.700-3.300V7.400c0-3.200-2-5.600-5.300-5.600z" fill="none" stroke="#e9ebf0" stroke-width="1.700" stroke-linejoin="round"/><path d="M8 18.400a2.100 2.100 0 0 0 4 0z" fill="#e9ebf0"/><circle cx="10" cy="1.300" r="0.900" fill="#e9ebf0"/></g></svg>
<div class="a" style="left:1097.600px;top:12px;width:17.600px;height:14.200px;border-radius:7.100px;background:#fb6468"></div>
<span class="t" style="left:1103.600px;top:11px;line-height:14px;font-size:10.500px;letter-spacing:-0.688px;font-family:'DejaVu Sans','Liberation Sans',sans-serif;color:#fff;">3</span>
<!-- avatar -->
<div class="a" style="left:1132px;top:17px;width:36px;height:36px;border-radius:18px;background:#5a6073"></div>
<svg style="left:1135px;top:20px" width="30" height="30" viewBox="0 0 30 30"><defs><clipPath id="av"><circle cx="15" cy="15" r="15"/></clipPath><linearGradient id="sky" x1="0" y1="0" x2="0" y2="1"><stop offset="0" stop-color="#d9d3ac"/><stop offset="0.350" stop-color="#a9c3a6"/><stop offset="0.600" stop-color="#5f9a86"/><stop offset="1" stop-color="#5d8a4a"/></linearGradient></defs><g clip-path="url(#av)"><rect width="30" height="30" fill="url(#sky)"/><path d="M0 13c2-1.500 5-1.500 8 0v8H0z" fill="#1a3a2e"/><path d="M0 20h10v10H0z" fill="#55803c"/><path d="M19 10c1.500-2 5-2 6.500 0 1 1.500 0.500 3-0.500 4l5 5v3H19z" fill="#1d4034"/><path d="M22 19l8-1v12h-9z" fill="#a4bfa9"/><path d="M8.500 30V18c0-3 1-5 3-6.500l-1-3C10.500 5 12 4 14 4c2.500 0 4 1.500 4.500 4l1 5c2 1.500 3.500 4 3.500 8v9z" fill="#0f2b26"/><path d="M5 9.500l5.500-1.500 0.500 1.500-5.500 1z" fill="#0f2b26"/><path d="M9.500 12c1-1 2.300-0.500 2.800 1l0.700 4c-1 1.500-3 1.500-3.800 0z" fill="#d9a590"/></g></svg>
<span class="t" style="left:1171.800px;top:26px;line-height:17px;font-size:12.500px;letter-spacing:0.199px;font-family:'DejaVu Sans','Liberation Sans',sans-serif;color:#f3f3f6;">Siddhartha Mukherjee</span>
<svg style="left:1316.500px;top:31.800px" width="8" height="6" viewBox="0 0 8 6"><path d="M1.200 1l2.800 2.800L6.800 1" fill="none" stroke="#f3f3f6" stroke-width="1.300"/></svg>
</div>
<div id="vscroll" class="a">
<svg style="left:3.500px;top:5.500px" width="8" height="5" viewBox="0 0 8 5"><path d="M4 0.300L7.700 4.600H0.300z" fill="#505050"/></svg>
<div class="a" style="left:2px;top:163px;width:11px;height:161px;background:#c1c1c1"></div>
<svg style="left:3.500px;top:328.800px" width="8" height="5" viewBox="0 0 8 5"><path d="M4 4.700L7.700 0.400H0.300z" fill="#8a8a8a"/></svg>
</div>
<div id="dev" class="a">
<div class="a" style="left:0;top:0;width:1366px;height:80px;background:#f3f3f3"></div>
<div class="hl" style="top:0px"></div>
<div class="hl" style="top:27px"></div>
<div class="hl" style="top:54px"></div>
<div class="hl" style="top:79px"></div>
<svg style="left:9.500px;top:7.500px" width="15" height="14" viewBox="0 0 15 14"><path d="M7 11.800H1.800a1.100 1.100 0 0 1-1.100-1.100V1.800a1.100 1.100 0 0 1 1.100-1.100h9a1.100 1.100 0 0 1 1.100 1.100V6" fill="none" stroke="#6e6e6e" stroke-width="1.300"/><path d="M5.800 5.400l7.600 3-3.200 1.200 3.400 3.400-1.100 1.100-3.400-3.400-1.200 3.200z" fill="#6e6e6e"/></svg>
<svg style="left:36px;top:6px" width="16" height="16" viewBox="0 0 16 16"><path d="M3.800 6.500V0.700h11v14.600H7" fill="none" stroke="#6e6e6e" stroke-width="1.300"/><rect x="0.700" y="6.700" width="6" height="8.600" fill="none" stroke="#6e6e6e" stroke-width="1.300"/><path d="M0.700 13.500h6" stroke="#6e6e6e" stroke-width="1.300"/></svg>
<div class="vl" style="left:62px;top:6px;height:16px"></div>
<span class="t" style="left:80.9px;top:7px;line-height:16px;font-size:12.600px;letter-spacing:-0.275px;color:#5f6368;">Elements</span>
<span class="t" style="left:155.5px;top:7px;line-height:16px;font-size:12.600px;letter-spacing:-0.417px;color:#5f6368;">Console</span>
<span class="t" style="left:222.4px;top:7px;line-height:16px;font-size:12.600px;letter-spacing:-0.558px;color:#5f6368;">Sources</span>
<span class="t" style="left:288.7px;top:7px;line-height:16px;font-size:12.600px;letter-spacing:0.102px;color:#333;">Network</span>
<span class="t" style="left:359.5px;top:7px;line-height:16px;font-size:12.600px;letter-spacing:-0.201px;color:#5f6368;">Performance</span>
<span class="t" style="left:453.8px;top:7px;line-height:16px;font-size:12.600px;letter-spacing:-0.031px;color:#5f6368;">Memory</span>
<span class="t" style="left:522.7px;top:7px;line-height:16px;font-size:12.600px;letter-spacing:0.007px;color:#5f6368;">Application</span>
<span class="t" style="left:608.5px;top:7px;line-height:16px;font-size:12.600px;letter-spacing:-0.213px;color:#5f6368;">Security</span>
<span class="t" style="left:676.7px;top:7px;line-height:16px;font-size:12.600px;letter-spacing:-0.143px;color:#5f6368;">Lighthouse</span>
<span class="t" style="left:760.7px;top:7px;line-height:16px;font-size:12.600px;letter-spacing:-0.300px;color:#5f6368;">AdBlock</span>
<div class="a" style="left:277px;top:25.500px;width:71px;height:2px;background:#1a73e8"></div>
<div class="vl" style="left:1275px;top:6px;height:16px"></div>
<svg style="left:1286.800px;top:6.900px" width="14" height="14" viewBox="0 0 24 24"><path d="M19.400 13c.04-.32.060-.650.060-1s-.020-.680-.070-1l2.110-1.650a.5.5 0 0 0 .12-.640l-2-3.460a.5.5 0 0 0-.61-.220l-2.490 1a7.300 7.300 0 0 0-1.690-.980l-.380-2.650A.49.49 0 0 0 14 2h-4a.49.49 0 0 0-.490.420l-.380 2.650c-.610.250-1.170.590-1.690.980l-2.490-1a.5.500 0 0 0-.610.220l-2 3.460a.49.490 0 0 0 .12.640L4.570 11c-.04.320-.07.660-.07 1s.03.680.07 1l-2.110 1.650a.5.500 0 0 0-.12.640l2 3.460c.12.220.39.300.61.220l2.490-1c.52.400 1.080.73 1.690.98l.38 2.650c.03.240.24.420.49.420h4c.25 0 .46-.18.490-.42l.38-2.650c.61-.25 1.170-.59 1.690-.98l2.490 1c.23.090.49 0 .61-.22l2-3.460a.5.500 0 0 0-.12-.64zM12 15.500A3.500 3.500 0 1 1 12 8.500a3.500 3.500 0 0 1 0 7z" fill="#6e6e6e"/></svg>
<svg style="left:1320.900px;top:8px" width="3" height="13" viewBox="0 0 3 13"><circle cx="1.500" cy="1.600" r="1.400" fill="#6e6e6e"/><circle cx="1.500" cy="6.300" r="1.400" fill="#6e6e6e"/><circle cx="1.500" cy="11" r="1.400" fill="#6e6e6e"/></svg>
<svg style="left:1345px;top:9px" width="10" height="10" viewBox="0 0 10 10"><path d="M0.600 0.600l8.800 8.800M9.400 0.600L0.600 9.400" stroke="#6e6e6e" stroke-width="1.500"/></svg>
<div class="a" style="left:8px;top:33px;width:16px;height:16px;border-radius:8px;background:radial-gradient(circle,#eb0000 0,#eb0000 5.800px,rgba(240,80,80,.5) 6.500px,rgba(240,120,120,0) 8px)"></div>
<svg style="left:37.400px;top:34.400px" width="14" height="14" viewBox="0 0 14 14"><circle cx="7" cy="7" r="5.600" fill="none" stroke="#6e6e6e" stroke-width="1.800"/><path d="M3 3l8 8" stroke="#6e6e6e" stroke-width="1.800"/></svg>
<div class="vl" style="left:62px;top:33px;height:16px"></div>
<svg style="left:73.500px;top:35.800px" width="15" height="12.500" viewBox="0 0 15 12.500"><path d="M1 0.800h13L9.200 6.500v4.800l-3.400-0V6.500z" fill="#f28b8b" stroke="#e8000b" stroke-width="1.500" stroke-linejoin="round"/><path d="M2.500 1.500h10L8.600 5.800H6.400z" fill="#f3f3f3"/></svg>
<svg style="left:101.500px;top:35px" width="15" height="15" viewBox="0 0 15 15"><circle cx="5.300" cy="5.300" r="4.300" fill="none" stroke="#6e6e6e" stroke-width="1.400"/><path d="M8.500 8.500l5.300 5.300" stroke="#6e6e6e" stroke-width="1.600"/></svg>
<div class="vl" style="left:127px;top:33px;height:16px"></div>
<div class="cb" style="left:138px;top:35px"></div>
<span class="t" style="left:156.3px;top:34px;line-height:16px;font-size:12.600px;letter-spacing:-0.300px;color:#444;">Preserve log</span>
<div class="cb" style="left:235px;top:35px"></div>
<span class="t" style="left:253.6px;top:34px;line-height:16px;font-size:12.600px;letter-spacing:-0.462px;color:#444;">Disable cache</span>
<div class="vl" style="left:336px;top:33px;height:16px"></div>
<span class="t" style="left:347.4px;top:34px;line-height:16px;font-size:12.600px;letter-spacing:-0.084px;color:#5f6368;">Online</span>
<svg style="left:407px;top:37.500px" width="7" height="6" viewBox="0 0 7 6"><path d="M0 0h7L3.500 6z" fill="#6e6e6e"/></svg>
<div class="vl" style="left:426px;top:33px;height:16px"></div>
<svg style="left:439.500px;top:35.500px" width="11" height="12" viewBox="0 0 11 12"><path d="M5.500 0L10.500 5.200H7.300V8.800H3.700V5.200H0.500z" fill="#6e6e6e"/><rect x="0.500" y="10.300" width="10" height="1.500" fill="#6e6e6e"/></svg>
<svg style="left:467.500px;top:35.500px" width="11" height="12" viewBox="0 0 11 12"><path d="M5.500 8.800L10.500 3.600H7.300V0H3.700V3.600H0.500z" fill="#6e6e6e"/><rect x="0.500" y="10.300" width="10" height="1.500" fill="#6e6e6e"/></svg>
<div class="vl" style="left:1331px;top:33px;height:16px"></div>
<svg style="left:1343px;top:33.900px" width="14" height="14" viewBox="0 0 24 24"><path d="M19.400 13c.04-.32.060-.650.060-1s-.020-.680-.070-1l2.110-1.650a.5.5 0 0 0 .12-.640l-2-3.460a.5.5 0 0 0-.61-.220l-2.490 1a7.300 7.300 0 0 0-1.690-.980l-.380-2.650A.49.49 0 0 0 14 2h-4a.49.49 0 0 0-.490.420l-.380 2.650c-.610.250-1.170.590-1.690.980l-2.490-1a.5.500 0 0 0-.610.220l-2 3.460a.49.490 0 0 0 .12.640L4.570 11c-.04.320-.07.660-.07 1s.03.680.07 1l-2.110 1.650a.5.500 0 0 0-.12.640l2 3.460c.12.220.39.300.61.220l2.490-1c.52.400 1.080.73 1.690.98l.38 2.650c.03.240.24.420.49.420h4c.25 0 .46-.18.490-.42l.38-2.650c.61-.25 1.170-.59 1.690-.98l2.490 1c.23.090.49 0 .61-.22l2-3.460a.5.500 0 0 0-.12-.64zM12 15.500A3.500 3.500 0 1 1 12 8.500a3.500 3.500 0 0 1 0 7z" fill="#6e6e6e"/></svg>
<div class="a" style="left:4px;top:58px;width:163px;height:18px;background:#fff"></div>
<span class="t" style="left:7.4px;top:60px;line-height:16px;font-size:12.600px;letter-spacing:0.017px;color:#7a7a7a;">Filter</span>
<div class="cb" style="left:180px;top:61px"></div>
<span class="t" style="left:198.6px;top:60px;line-height:16px;font-size:12.600px;letter-spacing:-0.536px;color:#444;">Hide data URLs</span>
<span class="t" style="left:290.3px;top:60px;line-height:16px;font-size:12.600px;letter-spacing:-0.067px;color:#444;">All</span>
<div class="vl" style="left:311.500px;top:59px;height:16px"></div>
<div class="a" style="left:316.400px;top:58.500px;width:29px;height:18px;border-radius:5px;background:#a3a3a3"></div>
<span class="t" style="left:320.3px;top:60px;line-height:16px;font-size:12.600px;letter-spacing:-1.831px;color:#e4e4e4;">XHR</span>
<span class="t" style="left:353px;top:60px;line-height:16px;font-size:12.600px;letter-spacing:-1.302px;color:#444;">JS</span>
<span class="t" style="left:375.6px;top:60px;line-height:16px;font-size:12.600px;letter-spacing:-2.069px;color:#444;">CSS</span>
<span class="t" style="left:405.6px;top:60px;line-height:16px;font-size:12.600px;letter-spacing:-0.333px;color:#444;">Img</span>
<span class="t" style="left:436.3px;top:60px;line-height:16px;font-size:12.600px;letter-spacing:-0.302px;color:#444;">Media</span>
<span class="t" style="left:479.9px;top:60px;line-height:16px;font-size:12.600px;letter-spacing:-0.226px;color:#444;">Font</span>
<span class="t" style="left:515px;top:60px;line-height:16px;font-size:12.600px;letter-spacing:-0.635px;color:#444;">Doc</span>
<span class="t" style="left:546px;top:60px;line-height:16px;font-size:12.600px;letter-spacing:-1.548px;color:#444;">WS</span>
<span class="t" style="left:573.4px;top:60px;line-height:16px;font-size:12.600px;letter-spacing:0.036px;color:#444;">Manifest</span>
<span class="t" style="left:631.8px;top:60px;line-height:16px;font-size:12.600px;letter-spacing:0.060px;color:#444;">Other</span>
<div class="cb" style="left:679px;top:61px"></div>
<span class="t" style="left:697.2px;top:60px;line-height:16px;font-size:12.600px;letter-spacing:-0.353px;color:#444;">Has blocked cookies</span>
<div class="cb" style="left:816px;top:61px"></div>
<span class="t" style="left:834.2px;top:60px;line-height:16px;font-size:12.600px;letter-spacing:-0.338px;color:#444;">Blocked Requests</span>
<!-- overview -->
<div class="a" style="left:103px;top:80px;width:1px;height:80px;background:#dedede"></div>
<span class="t" style="left:75.7px;top:83px;line-height:13px;font-size:10.200px;letter-spacing:-0.470px;color:#333;">20 ms</span>
<div class="a" style="left:206px;top:80px;width:1px;height:80px;background:#dedede"></div>
<span class="t" style="left:178.8px;top:83px;line-height:13px;font-size:10.200px;letter-spacing:-0.470px;color:#333;">40 ms</span>
<div class="a" style="left:309px;top:80px;width:1px;height:80px;background:#dedede"></div>
<span class="t" style="left:282.0px;top:83px;line-height:13px;font-size:10.200px;letter-spacing:-0.470px;color:#333;">60 ms</span>
<div class="a" style="left:413px;top:80px;width:1px;height:80px;background:#dedede"></div>
<span class="t" style="left:385.1px;top:83px;line-height:13px;font-size:10.200px;letter-spacing:-0.470px;color:#333;">80 ms</span>
<div class="a" style="left:516px;top:80px;width:1px;height:80px;background:#dedede"></div>
<span class="t" style="left:483.1px;top:83px;line-height:13px;font-size:10.200px;letter-spacing:-0.470px;color:#333;">100 ms</span>
<div class="a" style="left:619px;top:80px;width:1px;height:80px;background:#dedede"></div>
<span class="t" style="left:586.3px;top:83px;line-height:13px;font-size:10.200px;letter-spacing:-0.470px;color:#333;">120 ms</span>
<div class="a" style="left:722px;top:80px;width:1px;height:80px;background:#dedede"></div>
<span class="t" style="left:689.4px;top:83px;line-height:13px;font-size:10.200px;letter-spacing:-0.470px;color:#333;">140 ms</span>
<div class="a" style="left:825px;top:80px;width:1px;height:80px;background:#dedede"></div>
<span class="t" style="left:792.6px;top:83px;line-height:13px;font-size:10.200px;letter-spacing:-0.470px;color:#333;">160 ms</span>
<div class="a" style="left:928px;top:80px;width:1px;height:80px;background:#dedede"></div>
<span class="t" style="left:895.7px;top:83px;line-height:13px;font-size:10.200px;letter-spacing:-0.470px;color:#333;">180 ms</span>
<div class="a" style="left:1032px;top:80px;width:1px;height:80px;background:#dedede"></div>
<span class="t" style="left:998.9px;top:83px;line-height:13px;font-size:10.200px;letter-spacing:-0.470px;color:#333;">200 ms</span>
<div class="a" style="left:1135px;top:80px;width:1px;height:80px;background:#dedede"></div>
<span class="t" style="left:1102.1px;top:83px;line-height:13px;font-size:10.200px;letter-spacing:-0.470px;color:#333;">220 ms</span>
<div class="a" style="left:1238px;top:80px;width:1px;height:80px;background:#dedede"></div>
<span class="t" style="left:1205.2px;top:83px;line-height:13px;font-size:10.200px;letter-spacing:-0.470px;color:#333;">240 ms</span>
<div class="a" style="left:1341px;top:80px;width:1px;height:80px;background:#dedede"></div>
<span class="t" style="left:1308.4px;top:83px;line-height:13px;font-size:10.200px;letter-spacing:-0.470px;color:#333;">260 ms</span>
<div class="a" style="left:0;top:80px;width:2px;height:18px;background:#8a8a8a"></div>
<div class="a" style="left:0;top:98px;width:1px;height:62px;background:#d0d0d0"></div>
<div class="a" style="left:1364px;top:80px;width:2px;height:18px;background:#8a8a8a"></div>
<div class="a" style="left:0.0px;top:110.0px;width:18.0px;height:2px;background:#d8d8d8"></div>
<div class="a" style="left:18.0px;top:110.0px;width:2.0px;height:2px;background:#bcbcbc"></div>
<div class="a" style="left:20.0px;top:110.0px;width:236.5px;height:2px;background:#0bc144"></div>
<div class="a" style="left:256.5px;top:110.0px;width:9.0px;height:2px;background:#1a9cf0"></div>
<div class="a" style="left:265.5px;top:110.0px;width:6.5px;height:2px;background:#c9a9b4"></div>
<div class="a" style="left:272.0px;top:110.0px;width:282.5px;height:2px;background:#0bc144"></div>
<div class="a" style="left:554.5px;top:110.0px;width:7.5px;height:2px;background:#1a9cf0"></div>
<div class="a" style="left:92.0px;top:113.0px;width:3.0px;height:2px;background:#d9a9b9"></div>
<div class="a" style="left:95.0px;top:113.0px;width:234.5px;height:2px;background:#0bc144"></div>
<div class="a" style="left:329.5px;top:113.0px;width:18.5px;height:2px;background:#1a9cf0"></div>
<div class="a" style="left:22.0px;top:116.0px;width:326.5px;height:2px;background:#bcbcbc"></div>
<div class="a" style="left:348.5px;top:116.0px;width:5.0px;height:2px;background:#d9a9b9"></div>
<div class="a" style="left:353.5px;top:116.0px;width:614.0px;height:2px;background:#0bc144"></div>
<div class="a" style="left:967.5px;top:116.0px;width:2.5px;height:2px;background:#1a9cf0"></div>
<div class="a" style="left:0;top:160px;width:1366px;height:2px;background:#cdcdcd"></div>
<div class="a" style="left:0;top:162px;width:1366px;height:26px;background:#f3f3f3"></div>
<div class="hl" style="top:188px;background:#cdcdcd"></div>
<div class="a" style="left:0;top:189px;width:1366px;height:21px;background:#f5f5f5"></div>
<div class="a" style="left:432px;top:162px;width:1px;height:80px;background:#d0d0d0"></div>
<div class="a" style="left:562px;top:162px;width:1px;height:80px;background:#d0d0d0"></div>
<div class="a" style="left:692px;top:162px;width:1px;height:80px;background:#d0d0d0"></div>
<div class="a" style="left:907px;top:162px;width:1px;height:80px;background:#d0d0d0"></div>
<div class="a" style="left:1036px;top:162px;width:1px;height:80px;background:#d0d0d0"></div>
<div class="a" style="left:1165.5px;top:162px;width:1px;height:80px;background:#d0d0d0"></div>
<div class="a" style="left:0;top:162px;width:1px;height:80px;background:#c0c0c0"></div>
<span class="t" style="left:5.6px;top:167px;line-height:16px;font-size:12.600px;letter-spacing:-0.698px;color:#333;">Name</span>
<span class="t" style="left:437.1px;top:167px;line-height:16px;font-size:12.600px;letter-spacing:-0.317px;color:#333;">Status</span>
<span class="t" style="left:567.5px;top:167px;line-height:16px;font-size:12.600px;letter-spacing:-0.553px;color:#333;">Type</span>
<span class="t" style="left:697.2px;top:167px;line-height:16px;font-size:12.600px;letter-spacing:0.188px;color:#333;">Initiator</span>
<span class="t" style="left:912.4px;top:167px;line-height:16px;font-size:12.600px;letter-spacing:-0.925px;color:#333;">Size</span>
<span class="t" style="left:1041.6px;top:167px;line-height:16px;font-size:12.600px;letter-spacing:-0.483px;color:#333;">Time</span>
<span class="t" style="left:1170.2px;top:167px;line-height:16px;font-size:12.600px;letter-spacing:0.087px;color:#333;">Waterfall</span>
<svg style="left:1346.500px;top:170.500px" width="9" height="8" viewBox="0 0 9 8"><path d="M4.500 0L9 8H0z" fill="#6e6e6e"/></svg>
<div class="a" style="left:7px;top:192.200px;width:12px;height:14.500px;background:#fff;border:1px solid #9c9c9c"></div>
<span class="t" style="left:24.3px;top:191px;line-height:16px;font-size:12.600px;letter-spacing:-0.474px;color:#333;">get-state?_stoken=MTU5NzI0NDIyMTg1Nw==%7C%7C~bmpYK…SW_W…</span>
<span class="t" style="left:437.1px;top:191px;line-height:16px;font-size:12.600px;letter-spacing:-0.439px;color:#333;">200</span>
<span class="t" style="left:567.5px;top:191px;line-height:16px;font-size:12.600px;letter-spacing:-0.267px;color:#333;">xhr</span>
<span class="t" style="left:697.2px;top:191px;line-height:16px;font-size:12.600px;letter-spacing:-0.274px;color:#333;text-decoration:underline;">zone-evergreen.js:2845</span>
<span class="t" style="left:996px;top:191px;line-height:16px;font-size:12.600px;letter-spacing:-0.051px;color:#333;">1.7 kB</span>
<span class="t" style="left:1129.5px;top:191px;line-height:16px;font-size:12.600px;letter-spacing:-0.599px;color:#333;">57 ms</span>
<div class="a" style="left:7px;top:213.300px;width:12px;height:14.500px;background:#fff;border:1px solid #9c9c9c"></div>
<span class="t" style="left:24.3px;top:212px;line-height:16px;font-size:12.600px;letter-spacing:-0.523px;color:#333;">1?_stoken=MTU5NzI0NDIyMTg2Mw==%7C%7C~bmpYKhq9Pq~Hd…SW…</span>
<span class="t" style="left:437.1px;top:212px;line-height:16px;font-size:12.600px;letter-spacing:-0.439px;color:#333;">200</span>
<span class="t" style="left:567.5px;top:212px;line-height:16px;font-size:12.600px;letter-spacing:-0.267px;color:#333;">xhr</span>
<span class="t" style="left:697.2px;top:212px;line-height:16px;font-size:12.600px;letter-spacing:-0.274px;color:#333;text-decoration:underline;">zone-evergreen.js:2845</span>
<span class="t" style="left:996px;top:212px;line-height:16px;font-size:12.600px;letter-spacing:-0.051px;color:#333;">1.5 kB</span>
<span class="t" style="left:1122.8px;top:212px;line-height:16px;font-size:12.600px;letter-spacing:-0.552px;color:#333;">120 ms</span>
<div class="a" style="left:1170px;top:196.400px;width:54px;height:6.500px;background:#fff;border:1px solid #c4c4c4"></div>
<div class="a" style="left:1224.0px;top:193.0px;width:56.0px;height:13px;background:#0bc144"></div>
<div class="a" style="left:1280.0px;top:193.0px;width:1.5px;height:13px;background:#1a9cf0"></div>
<div class="a" style="left:1174px;top:217.400px;width:67px;height:6.500px;background:#fff;border:1px solid #c4c4c4"></div>
<div class="a" style="left:1241.0px;top:214.0px;width:120.5px;height:13px;background:#0bc144"></div>
<div class="a" style="left:1361.5px;top:214.0px;width:1.5px;height:13px;background:#1a9cf0"></div>
<div class="a" style="left:1270px;top:189px;width:1px;height:53px;background:rgba(0,0,0,.09)"></div>
<div class="a" style="left:1365px;top:162px;width:1px;height:80px;background:#d0d0d0"></div>
<div class="hl" style="top:242px"></div>
<div class="a" style="left:0;top:243px;width:1366px;height:55px;background:#f3f3f3"></div>
<div class="a" style="left:0;top:269px;width:1366px;height:2px;background:#cdcdcd"></div>
<span class="t" style="left:11.4px;top:249px;line-height:16px;font-size:12.600px;letter-spacing:-0.222px;color:#5f6368;">2 / 4 requests</span>
<span class="t" style="left:104.6px;top:249px;line-height:16px;font-size:12.600px;letter-spacing:-0.204px;color:#5f6368;">3.2 kB / 3.2 kB transferred</span>
<span class="t" style="left:265.1px;top:249px;line-height:16px;font-size:12.600px;letter-spacing:-0.364px;color:#5f6368;">2.1 kB / 2.1 kB resources</span>
<div class="vl" style="left:94px;top:249px;height:15px"></div>
<div class="vl" style="left:255px;top:249px;height:15px"></div>
<svg style="left:14.800px;top:277.500px" width="3" height="13" viewBox="0 0 3 13"><circle cx="1.500" cy="1.600" r="1.400" fill="#6e6e6e"/><circle cx="1.500" cy="6.400" r="1.400" fill="#6e6e6e"/><circle cx="1.500" cy="11.200" r="1.400" fill="#6e6e6e"/></svg>
<span class="t" style="left:37.5px;top:277px;line-height:16px;font-size:12.600px;letter-spacing:-0.403px;color:#333;">Console</span>
<span class="t" style="left:100.6px;top:277px;line-height:16px;font-size:12.600px;letter-spacing:-0.634px;color:#5f6368;">Issues</span>
<div class="hl" style="top:297px;background:#cdcdcd"></div>
<div class="a" style="left:28px;top:296px;width:63px;height:2px;background:#1a73e8"></div>
<svg style="left:1345px;top:279px" width="10" height="10" viewBox="0 0 10 10"><path d="M0.600 0.600l8.800 8.800M9.400 0.600L0.600 9.400" stroke="#6e6e6e" stroke-width="1.500"/></svg>
</div>
</body>
</html>
